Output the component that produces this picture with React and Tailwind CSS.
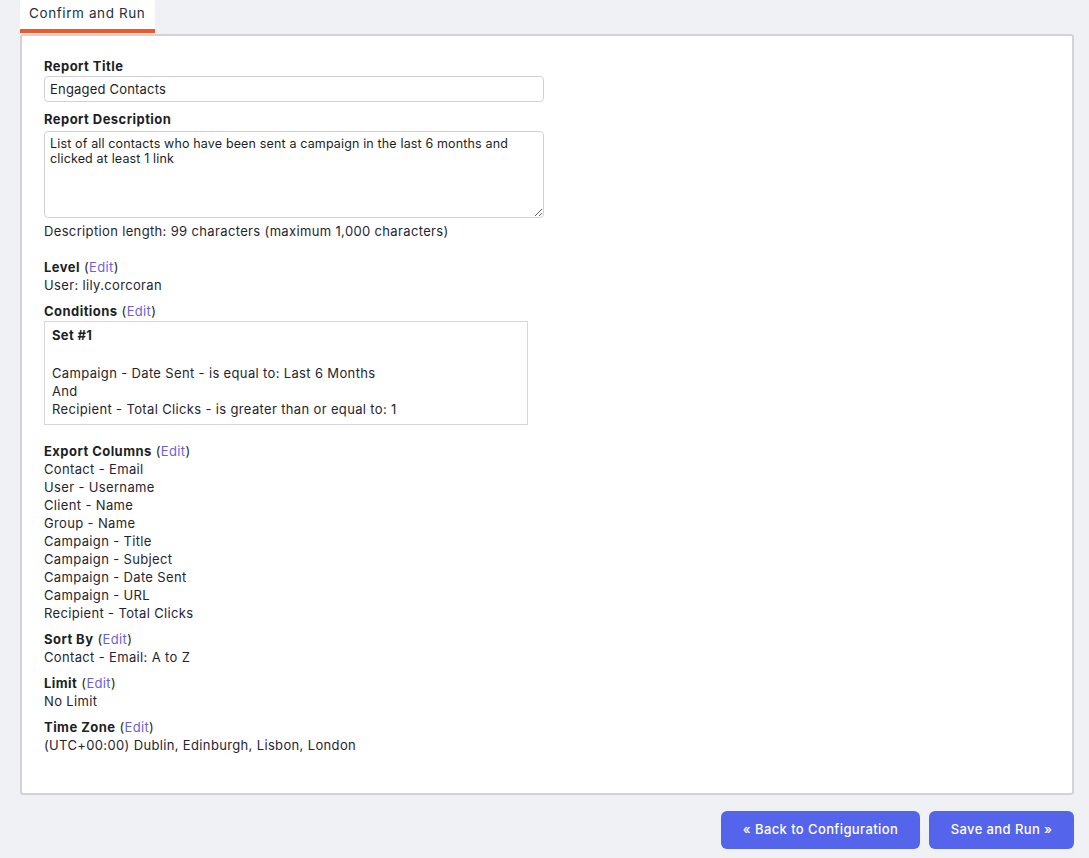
import React from "react";

const font = { fontFamily: "Inter, 'Noto Sans', sans-serif" };

function Label({ children, edit }) {
  return (
    <div className="leading-[18px]">
      <span className="font-bold text-[#1b1f27] tracking-[0.45px]">{children}</span>
      {edit && (
        <>
          {" "}
          <span className="text-[#1b1f27]">(</span>
          <span className="text-[#6a62dc]">Edit</span>
          <span className="text-[#1b1f27]">)</span>
        </>
      )}
    </div>
  );
}

export default function App() {
  const cols = [
    "Contact - Email",
    "User - Username",
    "Client - Name",
    "Group - Name",
    "Campaign - Title",
    "Campaign - Subject",
    "Campaign - Date Sent",
    "Campaign - URL",
    "Recipient - Total Clicks",
  ];
  return (
    <div
      className="min-h-[858px] bg-[#f0f1f5] text-[13px] text-[#1f2530] tracking-[0.35px]"
      style={font}
    >
      <div className="pl-[20px] pr-[15px]">
        <div className="flex">
          <div className="bg-white h-[33px] w-[135px] border-b-[4px] border-[#f0582a] pl-[9px] pt-[4px] leading-[18px] text-[13.5px] tracking-[0.6px] text-[#253040]">
            Confirm and Run
          </div>
        </div>
        <div className="mt-[1px] bg-white border-2 border-[#d3d3d6] rounded-[3px] pl-[22px] pt-[21px] pb-[39px]">
          <Label>Report Title</Label>
          <input
            readOnly
            value="Engaged Contacts"
            className="mt-[1px] block w-[500px] h-[26px] border border-[#cfd3d8] rounded-[4px] px-[5px] text-[13px] tracking-[0.2px] text-[#1b1f27] outline-none"
            style={font}
          />
          <div className="mt-[8px]">
            <Label>Report Description</Label>
          </div>
          <textarea
            readOnly
            value="List of all contacts who have been sent a campaign in the last 6 months and clicked at least 1 link"
            className="mt-[3px] block w-[500px] h-[87px] border border-[#cfd3d8] rounded-[4px] px-[5px] py-[4px] text-[12.5px] leading-[15px] tracking-[0.15px] text-[#1b1f27] outline-none"
            style={font}
          />
          <div className="mt-[4px] leading-[18px]">
            Description length: 99 characters (maximum 1,000 characters)
          </div>

          <div className="mt-[18px]">
            <Label edit>Level</Label>
            <div className="leading-[18px]">User: lily.corcoran</div>
          </div>

          <div className="mt-[8px]">
            <Label edit>Conditions</Label>
            <div className="mt-[1px] w-[484px] border border-[#d5d7db] px-[7px] pt-[4px] pb-[6px] leading-[18px]">
              <div className="font-bold text-[#1b1f27]">Set #1</div>
              <div className="h-[20px]" />
              <div>Campaign - Date Sent - is equal to: Last 6 Months</div>
              <div>And</div>
              <div>Recipient - Total Clicks - is greater than or equal to: 1</div>
            </div>
          </div>

          <div className="mt-[17px]">
            <Label edit>Export Columns</Label>
            {cols.map((c) => (
              <div key={c} className="leading-[18px]">
                {c}
              </div>
            ))}
          </div>

          <div className="mt-[8px]">
            <Label edit>Sort By</Label>
            <div className="leading-[18px]">Contact - Email: A to Z</div>
          </div>

          <div className="mt-[8px]">
            <Label edit>Limit</Label>
            <div className="leading-[18px]">No Limit</div>
          </div>

          <div className="mt-[8px]">
            <Label edit>Time Zone</Label>
            <div className="leading-[18px]">(UTC+00:00) Dublin, Edinburgh, Lisbon, London</div>
          </div>
        </div>

        <div className="flex justify-end gap-[9px] mt-[16px]">
          <button
            className="h-[38px] w-[199px] rounded-[6px] bg-[#5465ec] text-white text-[13px] font-medium tracking-[0.4px]"
            style={font}
          >
            « Back to Configuration
          </button>
          <button
            className="h-[38px] w-[145px] rounded-[6px] bg-[#5465ec] text-white text-[13px] font-medium tracking-[0.4px]"
            style={font}
          >
            Save and Run »
          </button>
        </div>
      </div>
    </div>
  );
}
